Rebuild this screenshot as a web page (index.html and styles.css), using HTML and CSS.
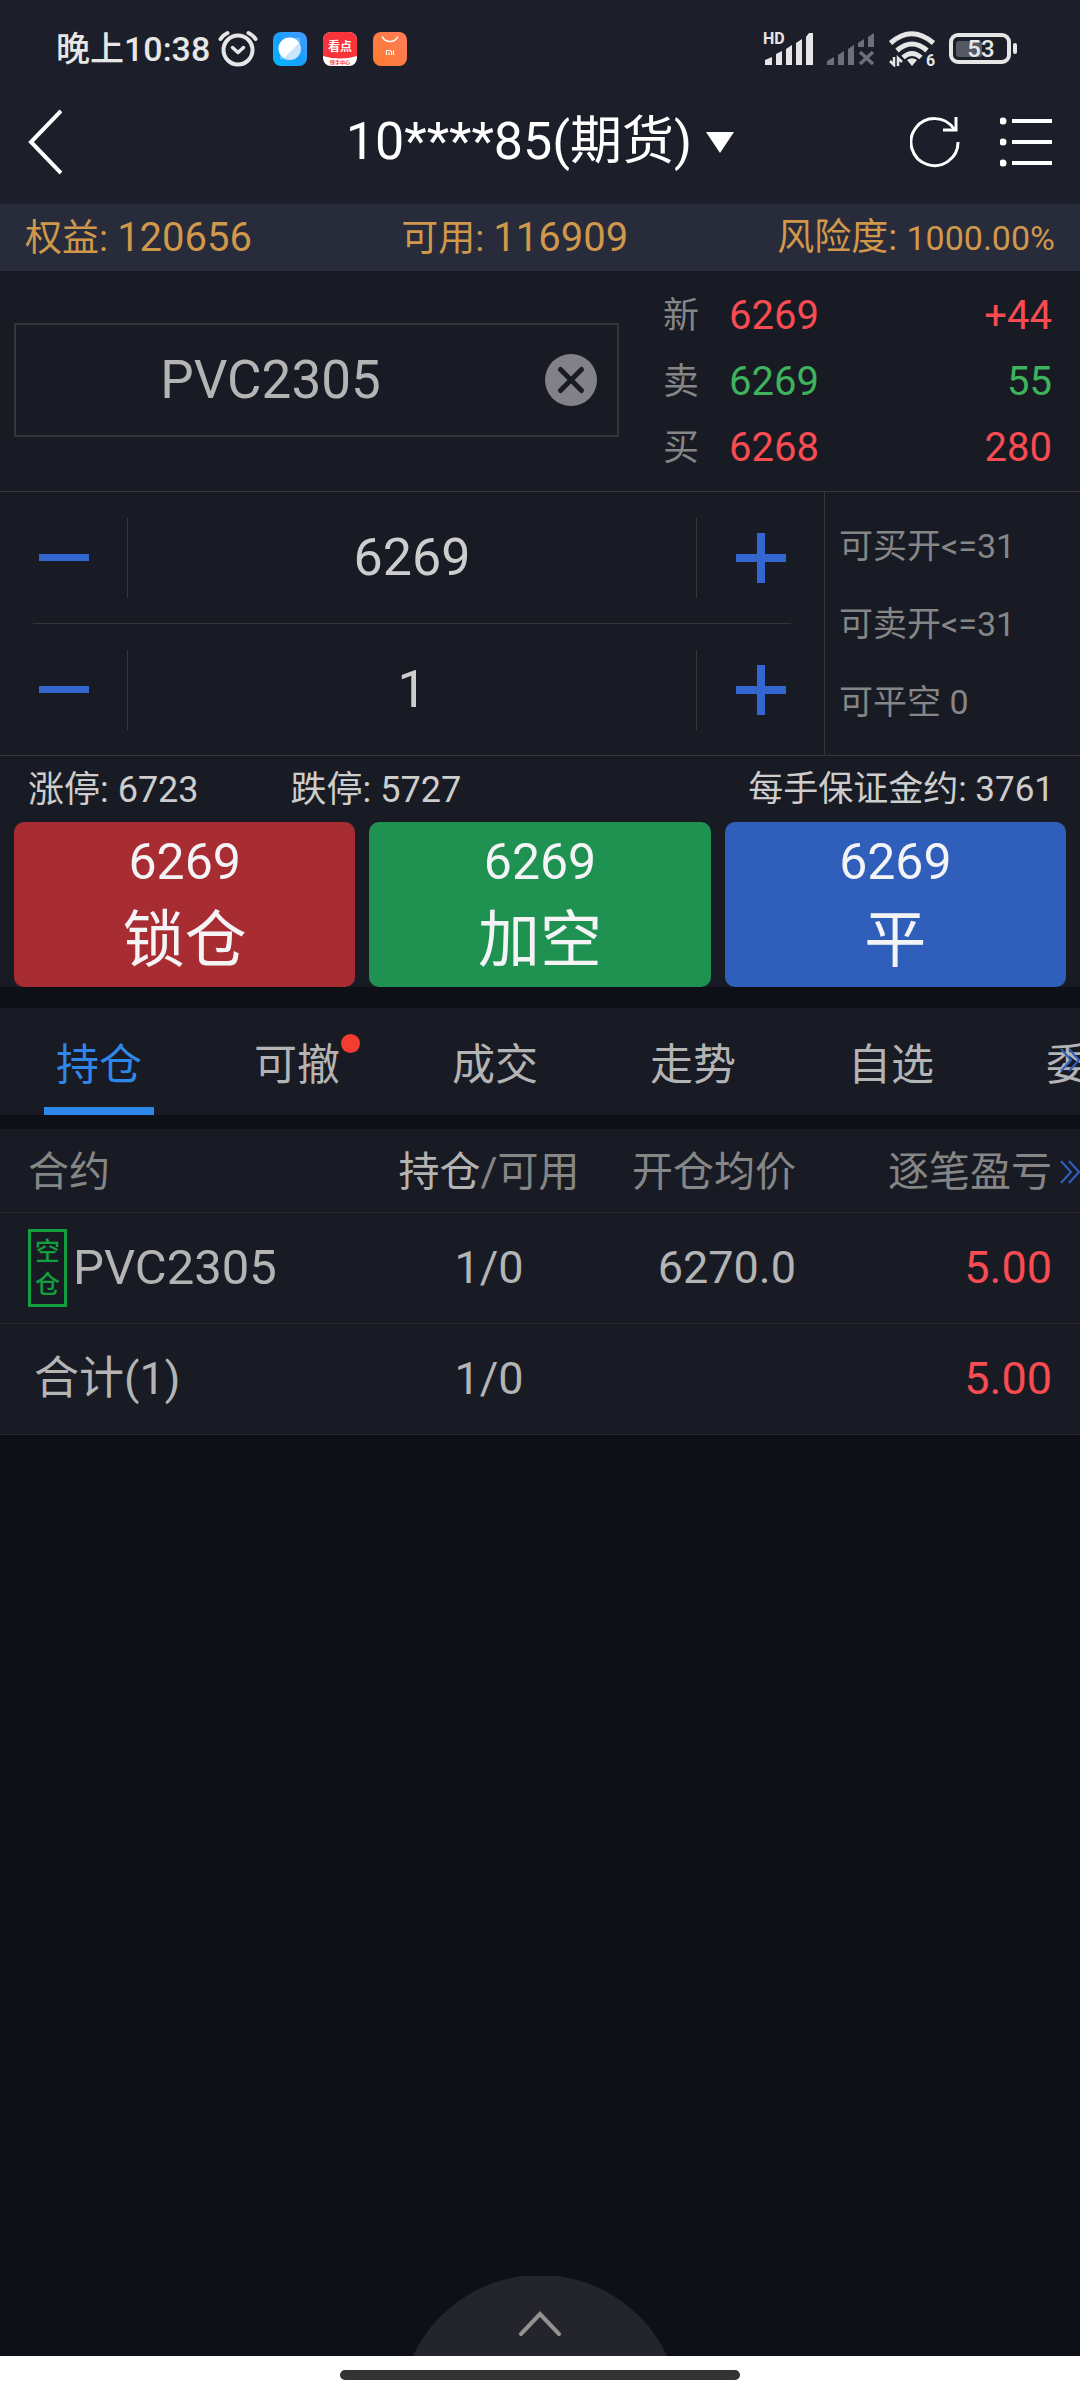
FILE: index.html
```html
<!DOCTYPE html>
<html lang="zh-CN">
<head>
<meta charset="utf-8">
<meta name="viewport" content="width=device-width, initial-scale=1">
<title>期货交易</title>
<link rel="stylesheet" href="styles.css">
</head>
<body>
<header class="top">
  <div class="status">
    <div class="status-side">
      <span class="clock">晚上10:38</span>
      <svg class="alarm" width="40" height="38" viewBox="0 0 40 38" fill="none" stroke="#e6e6e6" stroke-linecap="round" stroke-linejoin="round">
        <circle cx="20" cy="20" r="14.500" stroke-width="4"/>
        <path d="M14.500 17.500l5.500 5 5.500-5" stroke-width="3.500"/>
        <path d="M2.500 9q2.500-4 7-6M37.500 9q-2.500-4-7-6" stroke-width="4"/>
      </svg>
      <div class="apps">
        <svg width="34" height="34" viewBox="0 0 34 34">
          <defs><linearGradient id="blue" x1="0" y1="1" x2="1" y2="0"><stop offset="0" stop-color="#00b8fb"/><stop offset=".5" stop-color="#1a9dff"/><stop offset="1" stop-color="#4a9dff"/></linearGradient></defs>
          <rect width="34" height="34" rx="8" fill="url(#blue)"/>
          <path d="M7 27V17A11 11 0 0 1 17 6h10v11a11 11 0 0 1-11 11z" fill="#8fd0ff" opacity=".6"/>
          <circle cx="17" cy="17" r="11" fill="#c9e4ff"/>
          <path d="M26 11A11 11 0 1 0 11 26z" fill="#fff"/>
        </svg>
        <svg width="34" height="34" viewBox="0 0 34 34">
          <rect width="34" height="34" rx="8" fill="#fff"/>
          <path d="M0 24V8a8 8 0 0 1 8-8h18a8 8 0 0 1 8 8v16q-17 5-34 0z" fill="#f9333a"/>
          <text x="17" y="19" class="app-name">看点</text>
          <text x="17" y="32" class="app-tag">快手中心</text>
        </svg>
        <svg width="34" height="34" viewBox="0 0 34 34">
          <defs><linearGradient id="orange" x1="0" y1="1" x2="1" y2="0"><stop offset="0" stop-color="#ff7a30"/><stop offset="1" stop-color="#ff7d5c"/></linearGradient></defs>
          <rect width="34" height="34" rx="8" fill="url(#orange)"/>
          <path d="M9.500 5a8 7 0 0 0 15 0" fill="none" stroke="#fff" stroke-width="1.500" stroke-linecap="round"/>
          <path d="M13.500 23v-4.500h3.500q1.500 0 1.500 1.500v3M16 20.500V23M20.500 18.500V23" fill="none" stroke="#fff" stroke-width="1.200"/>
        </svg>
      </div>
    </div>
    <div class="status-side signals">
      <svg width="50" height="34" viewBox="0 0 50 34" fill="#e6e6e6">
        <text x="0" y="12" class="hd">HD</text>
        <path d="M2 33v-5l7-3v8zM13 33V22l6-3v14zM23 33V17l6-4v20zM33 33V11l6-4v26zM43 33V5l3-4h4v32z"/>
      </svg>
      <svg width="48" height="34" viewBox="0 0 48 34" fill="#6d7078">
        <path d="M0 33v-4l7-4v8zM11 33V23l6-4v14zM21 33V17l6-4v20zM31 15v-4l6-4v8zM41 15V5l6-4v14z"/>
        <path d="M33 20l13 12M46 20L33 32" stroke="#6d7078" stroke-width="3.500"/>
      </svg>
      <svg width="46" height="36" viewBox="0 0 46 36" fill="none" stroke="#e6e6e6" stroke-width="5">
        <path d="M1.500 12q21-18.500 43 0M8 19.500q15-13 30 0M14 26.500q9-8 18 0"/>
        <path d="M23 35l-5-6q5-3.500 10 0z" fill="#e6e6e6" stroke="none"/>
        <path d="M5 26v8l-4-4M9 35v-8l4 4" stroke-width="2.500"/>
        <text x="37" y="35" class="six">6</text>
      </svg>
      <svg width="68" height="32" viewBox="0 0 68 32">
        <rect x="7" y="8" width="26" height="16" rx="3" fill="#555861"/>
        <rect x="2" y="2" width="58" height="27" rx="7" fill="none" stroke="#e6e6e6" stroke-width="4"/>
        <rect x="64" y="10" width="4" height="11" rx="2" fill="#e6e6e6"/>
        <text x="32" y="24" class="charge">53</text>
      </svg>
    </div>
  </div>
  <div class="titlebar">
    <button class="icon-btn back" aria-label="返回">
      <svg width="34" height="66" viewBox="0 0 34 66" fill="none" stroke="#fff" stroke-width="4"><path d="M33 2L3 33l30 31"/></svg>
    </button>
    <button class="account"><span>10****85(期货)</span>
      <svg width="28" height="21" viewBox="0 0 28 21" fill="#fff"><path d="M0 0h28L14 21z"/></svg>
    </button>
    <div class="actions">
      <button class="icon-btn" aria-label="刷新">
        <svg width="50" height="52" viewBox="0 0 50 52" fill="none" stroke="#fff" stroke-width="3"><path d="M48 26a23.500 23.500 0 1 1-4-13"/><path d="M46 1v13H33"/></svg>
      </button>
      <button class="icon-btn" aria-label="菜单">
        <svg width="52" height="50" viewBox="0 0 52 50" fill="#fff"><circle cx="3" cy="4" r="3.500"/><circle cx="3" cy="25" r="3.500"/><circle cx="3" cy="46" r="3.500"/><path d="M12 2h40v4H12zM12 23h40v4H12zM12 44h40v4H12z"/></svg>
      </button>
    </div>
  </div>
</header>

<main>
  <div class="funds">
    <span>权益: <span class="fund-value">120656</span></span>
    <span>可用: <span class="fund-value">116909</span></span>
    <span>风险度: <span class="risk">1000.00%</span></span>
  </div>

  <section class="quote">
    <div class="contract">
      <input class="contract-input" type="text" value="PVC2305" aria-label="合约">
      <button class="icon-btn" aria-label="清除">
        <svg width="52" height="52" viewBox="0 0 52 52"><circle cx="26" cy="26" r="26" fill="#828188"/><path d="M15.500 15.500l21 21M36.500 15.500l-21 21" stroke="#191b24" stroke-width="5" stroke-linecap="round"/></svg>
      </button>
    </div>
    <table class="prices">
      <tr class="up"><th scope="row">新</th><td>6269</td><td class="num">+44</td></tr>
      <tr class="down"><th scope="row">卖</th><td>6269</td><td class="num">55</td></tr>
      <tr class="up"><th scope="row">买</th><td>6268</td><td class="num">280</td></tr>
    </table>
  </section>

  <section class="order">
    <div class="steppers">
      <div class="stepper">
        <button class="step" aria-label="价格减"><svg width="50" height="50" viewBox="0 0 50 50"><path d="M0 21h50v7H0z"/></svg></button>
        <input type="text" value="6269" aria-label="价格">
        <button class="step" aria-label="价格加"><svg width="50" height="50" viewBox="0 0 50 50"><path d="M0 21h21V0h8v21h21v8H29v21h-8V29H0z"/></svg></button>
      </div>
      <hr class="step-line">
      <div class="stepper">
        <button class="step" aria-label="手数减"><svg width="50" height="50" viewBox="0 0 50 50"><path d="M0 21h50v7H0z"/></svg></button>
        <input type="text" value="1" aria-label="手数">
        <button class="step" aria-label="手数加"><svg width="50" height="50" viewBox="0 0 50 50"><path d="M0 21h21V0h8v21h21v8H29v21h-8V29H0z"/></svg></button>
      </div>
    </div>
    <div class="limits">
      <span>可买开&lt;=31</span>
      <span>可卖开&lt;=31</span>
      <span>可平空 0</span>
    </div>
  </section>

  <section class="trade">
    <div class="bounds">
      <span>涨停: 6723</span>
      <span>跌停: 5727</span>
      <span class="margin">每手保证金约: 3761</span>
    </div>
    <div class="trade-buttons">
      <button class="trade-btn lock"><span class="trade-price">6269</span><span>锁仓</span></button>
      <button class="trade-btn short"><span class="trade-price">6269</span><span>加空</span></button>
      <button class="trade-btn close"><span class="trade-price">6269</span><span>平</span></button>
    </div>
  </section>

  <nav class="tabs">
    <a class="tab active" href="#positions"><span>持仓</span></a>
    <a class="tab" href="#pending"><span class="dotted">可撤</span></a>
    <a class="tab" href="#fills"><span>成交</span></a>
    <a class="tab" href="#trend"><span>走势</span></a>
    <a class="tab" href="#watch"><span>自选</span></a>
    <a class="tab" href="#orders"><span>委托</span></a>
    <svg class="more" width="20" height="24" viewBox="0 0 20 24" fill="none" stroke="#2f5fc0" stroke-width="2"><path d="M1 1l10 11L1 23M9 1l10 11L9 23"/></svg>
  </nav>

  <section class="positions" id="positions">
    <table class="holdings">
      <colgroup><col class="c-name"><col class="c-qty"><col class="c-avg"><col class="c-pl"></colgroup>
      <thead>
        <tr><th scope="col">合约</th><th scope="col" class="mid"><span class="sorted">持仓</span>/可用</th><th scope="col" class="avg">开仓均价</th><th scope="col" class="pl">逐笔盈亏</th></tr>
      </thead>
      <tbody>
        <tr><td><div class="held"><span class="side">空仓</span>PVC2305</div></td><td class="mid">1/0</td><td class="avg">6270.0</td><td class="pl gain">5.00</td></tr>
        <tr><td class="total">合计(1)</td><td class="mid">1/0</td><td></td><td class="pl gain">5.00</td></tr>
      </tbody>
    </table>
    <svg class="more" width="20" height="24" viewBox="0 0 20 24" fill="none" stroke="#2f5fc0" stroke-width="2"><path d="M1 1l10 11L1 23M9 1l10 11L9 23"/></svg>
  </section>

  <button class="drawer" aria-label="展开">
    <svg width="254" height="80" viewBox="0 0 254 80"><path d="M0 80A140 140 0 0 1 254 80z" fill="#24242c"/><path d="M108 58l19-20 19 20" fill="none" stroke="#929292" stroke-width="4" stroke-linecap="round"/></svg>
  </button>
</main>

<footer class="gesture"><div class="pill"></div></footer>
</body>
</html>
```
FILE: styles.css
```css
* { box-sizing: border-box; }

body {
  margin: 0;
  min-height: 100vh;
  display: flex;
  flex-direction: column;
  background: #0d1017;
  color: #b4b4b4;
  font-family: Roboto, "Noto Sans CJK SC", sans-serif;
  font-size: 36px;
}

button, input {
  font: inherit;
  color: inherit;
  background: none;
  border: 0;
  border-radius: 0;
  padding: 0;
  margin: 0;
  outline: 0;
}

svg { display: block; flex: none; }
a { color: inherit; text-decoration: none; }
table { border-collapse: separate; border-spacing: 0; }
th, td { padding: 0; font-weight: 400; text-align: left; }

/* Status bar and title */
.top { background: #1c1f29; color: #fff; }

.status {
  display: flex;
  justify-content: space-between;
  height: 80px;
  padding: 18px 63px 0 56px;
}

.status-side { display: flex; align-items: center; }
.clock { font-size: 34px; font-weight: 500; color: #e6e6e6; line-height: 62px; }
.alarm { margin: 0 15px 0 8px; }
.apps { display: flex; gap: 16px; }
.signals { gap: 14px; }

.app-name { font-size: 12px; font-weight: 700; fill: #fff; text-anchor: middle; }
.app-tag { font-size: 5px; font-weight: 700; fill: #f9333a; text-anchor: middle; }
.hd { font-size: 16px; font-weight: 700; }
.six { font-size: 16px; font-weight: 700; fill: #e6e6e6; stroke: none; }
.charge { font-size: 24px; font-weight: 500; fill: #e6e6e6; text-anchor: middle; }

.titlebar {
  display: grid;
  grid-template-columns: 1fr auto 1fr;
  align-items: center;
  height: 124px;
  padding: 0 28px;
}

.icon-btn { display: block; flex: none; cursor: pointer; }
.back { justify-self: start; }

.account {
  display: flex;
  align-items: center;
  gap: 14px;
  font-size: 52px;
  line-height: 64px;
}

.actions { display: flex; align-items: center; justify-content: flex-end; gap: 40px; }

/* Funds */
main { flex: 1; display: flex; flex-direction: column; }

.funds {
  display: flex;
  justify-content: space-between;
  padding: 2px 25px 0;
  background: #272b3a;
  color: #cf984b;
  font-size: 37px;
  line-height: 64px;
}

.fund-value { font-size: 40px; }
.risk { font-size: 34px; }

/* Quote */
.quote {
  display: grid;
  grid-template-columns: minmax(0, 1fr) 389px;
  gap: 44px;
  align-items: center;
  padding: 12px 28px 10px 14px;
  background: #191b24;
  border-bottom: 1px solid #35353a;
}

.contract {
  display: flex;
  align-items: center;
  height: 114px;
  margin-bottom: 4px;
  padding-right: 20px;
  border: 2px solid #35353a;
}

.contract-input {
  flex: 1;
  width: 100%;
  min-width: 0;
  height: 100%;
  padding-right: 20px;
  font-size: 53px;
  text-align: center;
}

.prices { width: 100%; font-size: 40px; line-height: 66px; }
.prices th { width: 66px; font-size: 36px; color: #868686; }
.prices .num { text-align: right; }
.up { color: #f84b52; }
.down { color: #3eb35c; }

/* Price and quantity */
.order {
  display: grid;
  grid-template-columns: minmax(0, 1fr) 256px;
  background: #191b24;
  border-bottom: 1px solid #35353a;
}

.stepper { display: grid; grid-template-columns: 127px minmax(0, 1fr) 127px; align-items: center; height: 131px; }
.step { display: grid; place-items: center; height: 100%; fill: #3367cf; cursor: pointer; }

.stepper input {
  width: 100%;
  min-width: 0;
  height: 80px;
  border-left: 1px solid #35353a;
  border-right: 1px solid #35353a;
  color: #cdcdcd;
  font-size: 52px;
  text-align: center;
}

.step-line { margin: 0 33px; border: 0; border-top: 1px solid #35353a; }

.limits {
  display: flex;
  flex-direction: column;
  justify-content: center;
  padding-left: 14px;
  border-left: 1px solid #35353a;
  color: #868686;
  font-size: 34px;
  line-height: 78px;
}

/* Trade buttons */
.trade { background: #191b24; color: #cdcdcd; }
.bounds { display: flex; gap: 92px; padding: 2px 26px 0 28px; line-height: 64px; }
.margin { margin-left: auto; font-size: 35px; }
.trade-buttons { display: grid; grid-template-columns: repeat(3, 1fr); gap: 14px; padding: 0 14px; }

.trade-btn {
  display: flex;
  flex-direction: column;
  align-items: center;
  height: 165px;
  padding-top: 4px;
  border-radius: 10px;
  color: #f4f4f6;
  font-size: 62px;
  line-height: 86px;
  cursor: pointer;
}

.trade-price { font-size: 50px; line-height: 72px; }
.lock { background: #a72d32; }
.short { background: #1f9151; }
.close { background: #305fbb; }

/* Tabs */
.tabs {
  position: relative;
  display: flex;
  overflow: hidden;
  margin: 21px 0 14px;
  background: #191b24;
  font-size: 43px;
  line-height: 99px;
}

.tab { flex: 0 0 198px; display: flex; justify-content: center; }
.tab span { padding-top: 8px; }
.active { color: #2f87ec; }
.tab.active span { padding: 8px 12px 0; box-shadow: inset 0 -8px #2f87ec; }
.dotted { position: relative; }

.dotted::after {
  content: "";
  position: absolute;
  top: 26px;
  right: -20px;
  width: 19px;
  height: 19px;
  border-radius: 50%;
  background: #f43d31;
}

.more { position: absolute; top: 40px; right: 0; }

/* Positions */
.positions { position: relative; background: #191b24; }
.positions .more { top: 31px; }
.holdings { width: 100%; table-layout: fixed; font-size: 45px; }
.holdings th, .holdings td { height: 111px; padding-left: 28px; border-bottom: 1px solid #26272f; line-height: 60px; }
.holdings th { height: 84px; padding-top: 2px; font-size: 41px; color: #868686; white-space: nowrap; }
.c-name { width: 34%; }
.c-qty { width: 22%; }
.c-avg { width: 19%; }
.c-pl { width: 25%; }
.holdings .mid { padding-left: 6px; text-align: center; }
.holdings .avg { padding-left: 0; padding-right: 14px; text-align: right; }
.holdings .pl { padding-left: 0; padding-right: 28px; text-align: right; }
.holdings .total { padding-left: 34px; }
.sorted { color: #b4b4b4; }
.gain { color: #f84b52; }
.held { display: flex; align-items: center; gap: 6px; font-size: 49px; }

.side {
  width: 39px;
  padding: 3px 4px;
  border: 3px solid #139e40;
  color: #139e40;
  font-size: 25px;
  font-weight: 500;
  line-height: 33px;
  word-break: break-all;
}

.drawer { align-self: center; margin-top: auto; cursor: pointer; }

.gesture { display: flex; justify-content: center; padding: 14px 0 20px; background: #fff; }
.pill { width: 37%; height: 10px; border-radius: 5px; background: #333; }
```
